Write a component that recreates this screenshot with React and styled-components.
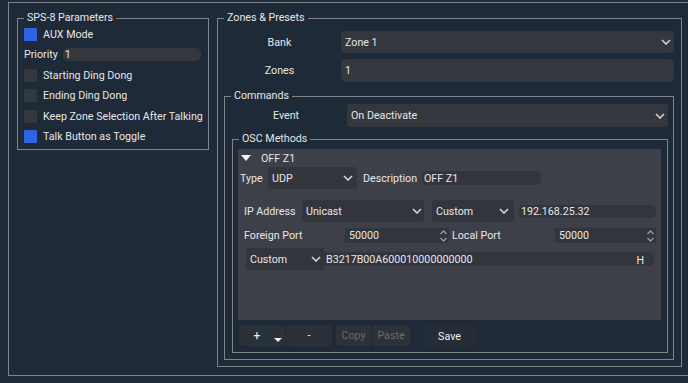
import React from 'react';
import styled, { createGlobalStyle } from 'styled-components';

const LINE = '#7f8489';
const PAGE = '#1e2a37';
const FIELD = '#34373e';
const PANEL = '#3e4049';
const PANEL_FIELD = '#33353d';
const TEXT = '#e6e6e6';

const GlobalStyle = createGlobalStyle`
  html, body {
    margin: 0;
    padding: 0;
    background: ${PAGE};
    overflow: hidden;
  }
  body {
    font-family: Roboto, "Noto Sans", sans-serif;
    font-size: 10.7px;
    color: ${TEXT};
  }
  * {
    box-sizing: border-box;
  }
`;

const Frame = styled.div`
  margin: 2px 0 0 8px;
  width: 680px;
  height: 374px;
  border: 1px solid ${LINE};
  border-right: none;
  display: flex;
  align-items: flex-start;
  gap: 8px;
  padding: 15px 0 0 8px;
`;

const Group = styled.div`
  position: relative;
  border: 1px solid ${LINE};
  display: flex;
  flex-direction: column;
  ${({ $w }) => $w && `width: ${$w}px;`}
  ${({ $h }) => $h && `height: ${$h}px;`}
  ${({ $fill }) => $fill && 'flex: 1;'}
  padding: ${({ $pad }) => $pad || '0'};
  margin: ${({ $m }) => $m || '0'};
`;

const GroupTitle = styled.span`
  position: absolute;
  top: -8px;
  left: 6px;
  padding: 0 3px;
  line-height: 14px;
  background: ${PAGE};
  color: ${TEXT};
  white-space: nowrap;
`;

const CheckRow = styled.div`
  display: flex;
  align-items: center;
  height: 20.5px;
  gap: 6px;
  white-space: nowrap;
`;

const Check = styled.span`
  width: 13px;
  height: 13px;
  border-radius: 1px;
  background: ${({ $on }) => ($on ? '#2f65e5' : FIELD)};
  flex: none;
`;

const PriorityRow = styled.div`
  display: flex;
  align-items: center;
  height: 20.5px;
  gap: 5px;
`;

const SmallField = styled.div`
  height: ${({ $h }) => $h || 13}px;
  width: ${({ $w }) => ($w ? `${$w}px` : 'auto')};
  background: ${({ $bg }) => $bg || FIELD};
  border-radius: 5px;
  padding: 0 ${({ $pr }) => $pr || 2}px 0 2px;
  display: flex;
  align-items: center;
  justify-content: space-between;
  line-height: 13px;
  white-space: nowrap;
  flex: none;
`;

const FormRow = styled.div`
  display: grid;
  grid-template-columns: ${({ $label }) => $label}px 1fr;
  align-items: center;
  height: ${({ $h }) => $h}px;
  margin-top: ${({ $mt }) => $mt || 0}px;
`;

const FormLabel = styled.span`
  text-align: center;
`;

const SelectBox = styled.div`
  height: ${({ $h }) => $h || 22}px;
  width: ${({ $w }) => ($w ? `${$w}px` : 'auto')};
  flex: none;
  background: ${({ $bg }) => $bg || FIELD};
  border-radius: 3px;
  display: flex;
  align-items: center;
  justify-content: space-between;
  padding: 0 ${({ $pr }) => $pr || 3}px 0 ${({ $pl }) => $pl || 4}px;
  white-space: nowrap;
`;

const TextBox = styled.div`
  height: 23px;
  background: ${FIELD};
  border-radius: 5px;
  display: flex;
  align-items: center;
  padding-left: 4px;
`;

const Panel = styled.div`
  flex: 1;
  background: ${PANEL};
  display: flex;
  flex-direction: column;
`;

const PanelHeader = styled.div`
  height: 17px;
  display: flex;
  align-items: center;
  gap: 10px;
  padding: 1px 0 0 3px;
  margin-bottom: 1px;
`;

const PanelRow = styled.div`
  display: flex;
  align-items: center;
  height: ${({ $h }) => $h}px;
  margin-top: ${({ $mt }) => $mt || 0}px;
  padding-left: ${({ $pl }) => $pl || 0}px;
`;

const RowLabel = styled.span`
  width: ${({ $w }) => $w}px;
  flex: none;
  white-space: nowrap;
  margin-left: ${({ $ml }) => $ml || 0}px;
`;

const Spin = styled.div`
  width: ${({ $w }) => $w}px;
  height: 15px;
  flex: none;
  background: ${PANEL_FIELD};
  display: flex;
  align-items: center;
  justify-content: space-between;
  padding: 0 1px 0 4px;
`;

const ButtonRow = styled.div`
  display: flex;
  align-items: flex-start;
  height: 21px;
  margin: 5px 0 0 1px;
`;

const ToolButton = styled.div`
  position: relative;
  width: ${({ $w }) => $w}px;
  height: ${({ $h }) => $h || 21}px;
  margin-left: ${({ $ml }) => $ml || 0}px;
  margin-top: ${({ $mt }) => $mt || 0}px;
  background: ${({ $bg }) => $bg || '#2b313b'};
  color: ${({ $dim }) => ($dim ? '#656a71' : '#f0f0f0')};
  border-radius: ${({ $r }) => ($r === undefined ? 4 : $r)}px;
  display: flex;
  align-items: center;
  justify-content: center;
  padding-right: ${({ $pr }) => $pr || 0}px;
  font-size: ${({ $fs }) => $fs || 10.7}px;
  flex: none;
`;

const MenuMark = styled.span`
  position: absolute;
  right: 3px;
  bottom: 4px;
  width: 0;
  height: 0;
  border-left: 4px solid transparent;
  border-right: 4px solid transparent;
  border-top: 4px solid #f0f0f0;
`;

const Chevron = () => (
  <svg width="10" height="6" viewBox="0 0 10 6" style={{ flex: 'none' }}>
    <path d="M1 1 L5 5 L9 1" fill="none" stroke="#d2d4d7" strokeWidth="1.6" />
  </svg>
);

const SpinArrows = () => (
  <svg width="9" height="14" viewBox="0 0 9 14" style={{ flex: 'none' }}>
    <path d="M1.5 5 L4.5 2 L7.5 5" fill="none" stroke="#979aa0" strokeWidth="1.3" />
    <path d="M1.5 9 L4.5 12 L7.5 9" fill="none" stroke="#979aa0" strokeWidth="1.3" />
  </svg>
);

const Triangle = () => (
  <svg width="10" height="7" viewBox="0 0 10 7" style={{ flex: 'none' }}>
    <path d="M0 0 L10 0 L5 6 Z" fill="#f2f2f2" />
  </svg>
);

function Sps8Parameters() {
  const checks = [
    ['Starting Ding Dong', false],
    ['Ending Ding Dong', false],
    ['Keep Zone Selection After Talking', false],
    ['Talk Button as Toggle', true],
  ];
  return (
    <Group $w={192} $h={132} $pad="5px 0 0 6px">
      <GroupTitle>SPS-8 Parameters</GroupTitle>
      <CheckRow>
        <Check $on />
        AUX Mode
      </CheckRow>
      <PriorityRow>
        <span>Priority</span>
        <SmallField $w={138}>1</SmallField>
      </PriorityRow>
      {checks.map(([label, on]) => (
        <CheckRow key={label}>
          <Check $on={on} />
          {label}
        </CheckRow>
      ))}
    </Group>
  );
}

function OscMethods() {
  return (
    <Group $fill $m="12px 0 6px 7px" $pad="9px 6px 6px 5px">
      <GroupTitle>OSC Methods</GroupTitle>
      <Panel>
        <PanelHeader>
          <Triangle />
          <span>OFF Z1</span>
        </PanelHeader>
        <PanelRow $h={22} $pl={2}>
          <RowLabel $w={28}>Type</RowLabel>
          <SelectBox $w={89} $bg={PANEL_FIELD} $pr={4}>
            UDP
            <Chevron />
          </SelectBox>
          <RowLabel $w={59} $ml={6}>Description</RowLabel>
          <SmallField $w={119} $h={14} $bg={PANEL_FIELD}>OFF Z1</SmallField>
        </PanelRow>
        <PanelRow $h={22} $mt={11} $pl={6}>
          <RowLabel $w={58}>IP Address</RowLabel>
          <SelectBox $w={122} $bg={PANEL_FIELD} $pr={2}>
            Unicast
            <Chevron />
          </SelectBox>
          <SelectBox $w={82} $bg={PANEL_FIELD} $pr={5} style={{ marginLeft: 8 }}>
            Custom
            <Chevron />
          </SelectBox>
          <SmallField $w={137} $bg={PANEL_FIELD} style={{ marginLeft: 5 }}>
            192.168.25.32
          </SmallField>
        </PanelRow>
        <PanelRow $h={15} $mt={6} $pl={6}>
          <RowLabel $w={101}>Foreign Port</RowLabel>
          <Spin $w={104}>
            50000
            <SpinArrows />
          </Spin>
          <RowLabel $w={103} $ml={3}>Local Port</RowLabel>
          <Spin $w={101}>
            50000
            <SpinArrows />
          </Spin>
        </PanelRow>
        <PanelRow $h={22} $mt={5} $pl={8}>
          <SelectBox $w={78} $bg={PANEL_FIELD} $pr={3} style={{ borderRadius: 0 }}>
            Custom
            <Chevron />
          </SelectBox>
          <SmallField $w={330} $h={14} $bg={PANEL_FIELD} $pr={10} style={{ borderRadius: '0 5px 5px 0' }}>
            <span>B3217B00A600010000000000</span>
            <span style={{ marginTop: 3 }}>H</span>
          </SmallField>
        </PanelRow>
      </Panel>
      <ButtonRow>
        <ToolButton $w={46} $pr={10} $fs={12}>
          +
          <MenuMark />
        </ToolButton>
        <ToolButton $w={46} $ml={1}>-</ToolButton>
        <ToolButton $w={35} $ml={4} $bg="#2d3239" $dim>Copy</ToolButton>
        <ToolButton $w={38} $ml={1} $bg="#2d3239" $dim>Paste</ToolButton>
        <ToolButton $w={53} $ml={13} $h={20} $mt={1} $r={0} $bg="#272d37">Save</ToolButton>
      </ButtonRow>
    </Group>
  );
}

function ZonesPresets() {
  return (
    <Group $w={465} $h={349} $pad="12px 7px 0 0">
      <GroupTitle>Zones &amp; Presets</GroupTitle>
      <FormRow $label={123} $h={22}>
        <FormLabel>Bank</FormLabel>
        <SelectBox>
          Zone 1
          <Chevron />
        </SelectBox>
      </FormRow>
      <FormRow $label={123} $h={23} $mt={6}>
        <FormLabel>Zones</FormLabel>
        <TextBox>1</TextBox>
      </FormRow>
      <Group $fill $m="14px 0 6px 6px" $pad="7px 5px 0 0">
        <GroupTitle>Commands</GroupTitle>
        <FormRow $label={122} $h={23}>
          <FormLabel>Event</FormLabel>
          <SelectBox $h={23}>
            On Deactivate
            <Chevron />
          </SelectBox>
        </FormRow>
        <OscMethods />
      </Group>
    </Group>
  );
}

export default function App() {
  return (
    <>
      <GlobalStyle />
      <Frame>
        <Sps8Parameters />
        <ZonesPresets />
      </Frame>
    </>
  );
}
